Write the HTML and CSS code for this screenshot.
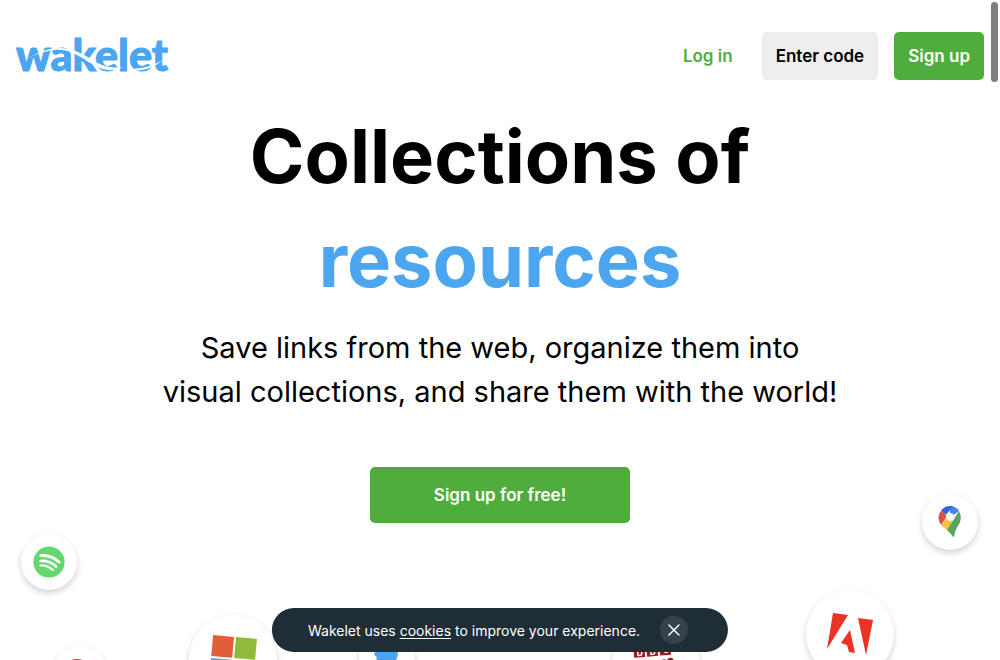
FILE: index.html
```html
<!DOCTYPE html>
<html lang="en">
<head>
<meta charset="utf-8">
<title>Wakelet</title>
<link rel="stylesheet" href="styles.css">
</head>
<body>
<header class="header">
  <a class="logo" href="#" aria-label="Wakelet">
    <svg width="152" height="40" viewBox="0 0 152 40">
      <text class="logo-text" x="0" y="35">wakelet</text>
      <path class="logo-wave" d="M4 26C16 20 27 15 39 14C58 12 70 27 84 32C92 35 100 35 106 31C98 32 92 31 86 29C74 24 62 11 41 12C28 13 16 20 4 26Z"/>
      <path class="logo-wave" d="M114 34C126 36 137 32 147 24C138 29 127 33 114 33Z"/>
    </svg>
  </a>
  <nav class="nav">
    <a class="login" href="#">Log in</a>
    <button class="button button-grey" type="button">Enter code</button>
    <button class="button button-green" type="button">Sign up</button>
  </nav>
</header>
<main class="hero">
  <h1 class="title">Collections of <span class="title-word">resources</span></h1>
  <p class="lead">Save links from the web, organize them into<br>visual collections, and share them with the world!</p>
  <button class="cta" type="button">Sign up for free!</button>
</main>
<div class="bubbles" aria-hidden="true">
  <div class="bubble maps"><svg width="24" height="32" viewBox="0 0 24 32">
    <path fill="#4a80ec" d="M12 0A11 11 0 0 1 21 5L12 12Z"/>
    <path fill="#2f68d8" d="M12 0L15 0L8 9L3 5Q6 0 12 0Z"/>
    <path fill="#dc5040" d="M3 5L9 10L3 19Q-2 11 3 5Z"/>
    <path fill="#f6bf42" d="M8 12L15 13L10 25L3 19Z"/>
    <path fill="#58a55c" d="M21 5Q25 13 20 20Q17 24 16 31Q14 31 13 28L9 24Z"/>
    <circle cx="12" cy="11" r="4" fill="#fff"/>
  </svg></div>
  <div class="bubble spotify"><svg width="32" height="32" viewBox="0 0 32 32">
    <circle cx="16" cy="16" r="15.6" fill="#62d86e"/>
    <g fill="none" stroke="#fff" stroke-linecap="round"><path stroke-width="3" d="M8 9.500Q18 8.500 26 16"/><path stroke-width="2.600" d="M7.500 15Q16 14 23 20.500"/><path stroke-width="2.200" d="M7.500 19.500Q14 19 20 24"/></g>
  </svg></div>
  <div class="bubble record"><svg width="24" height="30" viewBox="0 0 24 30"><circle cx="9" cy="14" r="14" fill="#c9304f"/></svg></div>
  <div class="bubble large microsoft"><svg width="48" height="48" viewBox="0 0 48 48"><g transform="translate(1 1) rotate(5 24 24)">
    <path fill="#e15f38" d="M1 1h21v21H1z"/><path fill="#8ebb3a" d="M24 1h21v21H24z"/><path fill="#50a5e6" d="M1 24h21v21H1z"/><path fill="#f7bd32" d="M24 24h21v21H24z"/></g></svg></div>
  <div class="bubble twitter"><svg width="28" height="24" viewBox="0 0 28 24"><path fill="#4ba3ee" d="M0 2Q2 8 8 8L10 1Q14-3 19 0Q23 1 24 3L27 2L25 6Q26 22 9 23Q4 23 0 20Q5 20 8 18Q4 17 3 14H5Q1 12 1 8L3 9Q0 6 0 2Z"/></svg></div>
  <div class="bubble large bbc"><svg width="50" height="44" viewBox="0 0 50 44"><g transform="rotate(-5 25 22)">
    <path fill="#9b1c1f" d="M4 1h11v11H4zM17 1h11v11H17zM30 1h11v11H30z"/>
    <path fill="none" stroke="#fff" stroke-width="1.500" d="M8 3v7h3q2-2 0-4q1-3-1-3zM21 3v7h3q2-2 0-4q1-3-1-3zM38 4q-4-1-4 2.500t4 2.500"/>
    <path fill="#9b1c1f" d="M28 17h4v-1h3v1h2v-1q5-2 6 1v3H28z"/></g></svg></div>
  <div class="bubble large adobe"><svg width="48" height="44" viewBox="0 0 48 44"><path fill="#e93324" d="M7 1L22 3L1 37ZM32 6L47 8L40 43ZM24 18L29 41L23 40L21 33L15 31Z"/></svg></div>
</div>
<aside class="cookies">
  <p class="cookies-text">Wakelet uses <a class="cookies-link" href="#">cookies</a> to improve your experience.</p>
  <button class="close" type="button" aria-label="Close"><svg width="12" height="12" viewBox="0 0 12 12"><path fill="none" stroke="#fff" stroke-width="1.500" stroke-linecap="round" d="M1 1L11 11M11 1L1 11"/></svg></button>
</aside>
<div class="scroll-thumb" aria-hidden="true"></div>
</body>
</html>
```
FILE: styles.css
```css
* { box-sizing: border-box; }
html, body { height: 100%; }
body {
  position: relative;
  margin: 0;
  overflow: hidden;
  background: #fff;
  color: #000;
  font-family: Inter, "Liberation Sans", sans-serif;
}
button { border: 0; padding: 0; font-family: inherit; cursor: pointer; }
.header {
  display: flex;
  align-items: center;
  justify-content: space-between;
  padding: 32px 16px 0;
}
.logo, .logo svg { display: block; }
.logo svg { overflow: visible; }
.logo-text {
  fill: #4ba6ef;
  stroke: #4ba6ef;
  stroke-width: 1px;
  font-family: Lato, sans-serif;
  font-size: 43px;
  font-weight: 900;
}
.logo-wave { fill: #fff; }
.nav { display: flex; align-items: center; gap: 16px; font-size: 17px; font-weight: 600; }
.login { padding: 0 13px; color: #4fae3b; text-decoration: none; }
.button { height: 48px; padding: 0 14px; border-radius: 5px; font-size: 17px; font-weight: 600; }
.button-grey { background: #eee; color: #000; }
.button-green { background: #4fae3b; color: #fff; }
.hero { display: flex; flex-direction: column; align-items: center; padding: 24px 16px 0; text-align: center; }
.title { margin: 0; font-size: 74px; line-height: 104px; font-weight: 700; }
.title-word { display: block; color: #4ba6ef; }
.lead { margin: 14px 0 0; font-size: 29px; line-height: 44px; }
.cta {
  width: 260px;
  height: 56px;
  margin-top: 53px;
  border-radius: 5px;
  background: #4fae3b;
  color: #fff;
  font-size: 17px;
  font-weight: 600;
}
.bubbles { position: absolute; inset: 0; overflow: hidden; pointer-events: none; }
.bubble {
  position: absolute;
  display: flex;
  align-items: center;
  justify-content: center;
  width: 56px;
  height: 56px;
  border-radius: 50%;
  background: #fff;
  box-shadow: 0 3px 6px rgba(0, 0, 0, 0.18);
}
.large { width: 88px; height: 88px; }
.maps { right: 22px; top: 494px; }
.spotify { left: 21px; top: 534px; }
.record { left: 52px; top: 646px; }
.microsoft { left: 189px; top: 615px; }
.twitter { left: 359px; top: 628px; }
.bbc { left: 612px; top: 622px; }
.adobe { right: 106px; top: 590px; }
.cookies {
  position: absolute;
  left: 50%;
  bottom: 8px;
  display: flex;
  align-items: center;
  gap: 20px;
  height: 44px;
  padding: 0 40px 0 36px;
  border-radius: 22px;
  background: #1f2d36;
  color: #fff;
  transform: translateX(-50%);
}
.cookies-text { margin: 0; font-size: 14px; white-space: nowrap; }
.cookies-link { color: inherit; text-underline-offset: 2px; }
.close {
  display: flex;
  align-items: center;
  justify-content: center;
  width: 28px;
  height: 28px;
  border-radius: 50%;
  background: #35424a;
}
.scroll-thumb { position: absolute; top: 2px; right: 2px; width: 7px; height: 80px; border-radius: 4px; background: #7f7f7f; }
```
